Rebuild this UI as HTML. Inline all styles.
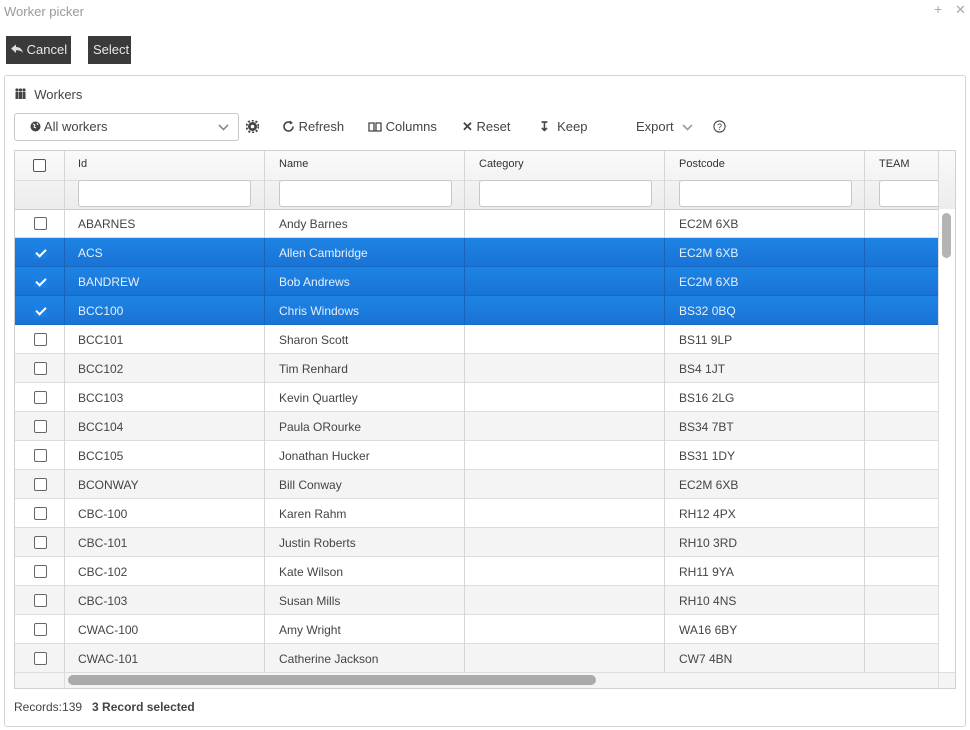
<!DOCTYPE html>
<html><head><meta charset="utf-8">
<style>
*{box-sizing:border-box;margin:0;padding:0}
body{width:970px;height:730px;background:#fff;font-family:"Liberation Sans",sans-serif;font-size:12px;color:#333;position:relative;overflow:hidden}
.a{position:absolute}
.btn{position:absolute;background:#3a3a3a;color:#e8e8e8;font-size:13px;height:28px;line-height:28px;padding:0 5px;white-space:nowrap}
.panel{left:4px;top:75px;width:962px;height:652px;border:1px solid #d4d4d4;border-radius:3px}
.tb{top:119px;font-size:13px;color:#444;white-space:nowrap}
.grid{left:14px;top:150px;width:942px;height:539px;border:1px solid #d0d0d0;overflow:hidden}
.hdr{left:0;top:0;width:942px;height:58px;background:linear-gradient(#fafafa,#ececec)}
.vl{position:absolute;top:0;width:1px;background:#d6d6d6}
.ht{position:absolute;top:7px;font-size:11px;color:#333}
.fi{position:absolute;top:29px;height:27px;background:#fff;border:1px solid #c8c8c8;border-radius:3px}
.row{position:absolute;left:0;width:924px;height:29px;border-bottom:1px solid #dcdcdc;font-size:12px;line-height:30px;color:#444}
.row span{position:absolute;top:0}
.row.g{background:#f4f4f4}
.row.s{background:linear-gradient(#1d84e3,#1973d6);color:#e6f0fb;border-bottom:1px solid #1868c4}
.cb{position:absolute;left:19px;top:8px;width:13px;height:13px;border:1px solid #666;border-radius:2px;background:#fff}
.s .cb{border:none;background:#1a80e6}
.s .cb:after{content:"";position:absolute;left:4px;top:1px;width:4px;height:8px;border:solid #fff;border-width:0 2px 2px 0;transform:rotate(45deg)}
.cl{position:absolute;top:0;width:1px;height:29px;background:#d6d6d6}
.s .cl{background:#1a64b8}
</style></head><body>
<div class="a" style="left:4px;top:4px;font-size:13px;color:#999">Worker picker</div>
<div class="a" style="left:934px;top:1px;font-size:14px;color:#aaa">+</div>
<div class="a" style="left:955px;top:2px;font-size:13px;color:#aaa">✕</div>
<div class="btn" style="left:6px;top:36px;width:65px"><svg width="12" height="10" viewBox="0 0 12 10" style="vertical-align:0px"><path d="M0 4.5L5 0.5v2.5c4 0 6 2 7 6-1.5-2-3.5-2.8-7-2.8v2.8z" fill="#ddd"/></svg> Cancel</div>
<div class="btn" style="left:88px;top:36px;width:43px">Select</div>

<div class="a panel"></div>
<div class="a" style="left:14px;top:87px;font-size:13px;color:#444"><svg width="13" height="12" viewBox="0 0 13 12" style="vertical-align:-1px"><g fill="#444"><circle cx="3" cy="2" r="1.6"/><circle cx="6.5" cy="2" r="1.6"/><circle cx="10" cy="2" r="1.6"/><rect x="1.5" y="4" width="3" height="7"/><rect x="5" y="4" width="3" height="7"/><rect x="8.5" y="4" width="3" height="7"/></g></svg>&nbsp; Workers</div>

<div class="a" style="left:14px;top:113px;width:225px;height:28px;border:1px solid #c8c8c8;border-radius:3px;font-size:13px;color:#444;line-height:26px;padding-left:15px"><svg width="11" height="11" viewBox="0 0 11 11" style="vertical-align:-1px"><circle cx="5.5" cy="5.5" r="5" fill="#444"/><path d="M3 3l2 1-1 2 2 1M7 2l1 2" stroke="#fff" stroke-width="1" fill="none"/></svg> All workers
<svg class="a" style="right:9px;top:10px" width="11" height="7" viewBox="0 0 11 7"><path d="M1 1l4.5 4.5L10 1" stroke="#888" stroke-width="1.6" fill="none"/></svg></div>
<svg class="a" style="left:246px;top:120px" width="13" height="13" viewBox="0 0 13 13"><circle cx="6.5" cy="6.5" r="4.5" fill="#444"/><circle cx="6.5" cy="6.5" r="6" fill="none" stroke="#444" stroke-width="2" stroke-dasharray="2 1.9"/><circle cx="6.5" cy="6.5" r="1.8" fill="#fff"/></svg>
<div class="a tb" style="left:282px"><svg width="13" height="13" viewBox="0 0 13 13" style="vertical-align:-2px"><path d="M11 6.5A4.5 4.5 0 1 1 9.2 2.9" stroke="#444" stroke-width="1.6" fill="none"/><path d="M8 0.5l3 2.5-3.3 1.5z" fill="#444"/></svg> Refresh</div>
<div class="a tb" style="left:368px"><svg width="14" height="11" viewBox="0 0 14 11" style="vertical-align:-1px"><path d="M1 2h5v8H1zM8 2h5v8H8z M6 10h2" stroke="#444" stroke-width="1.3" fill="none"/></svg> Columns</div>
<div class="a tb" style="left:462px"><span style="font-weight:bold">✕</span> Reset</div>
<div class="a tb" style="left:539px"><span style="font-weight:bold">&#8615;</span>&nbsp; Keep</div>
<div class="a tb" style="left:636px">Export <svg width="11" height="7" viewBox="0 0 11 7" style="margin-left:5px"><path d="M1 1l4.5 4.5L10 1" stroke="#999" stroke-width="1.6" fill="none"/></svg></div>
<svg class="a" style="left:713px;top:120px" width="13" height="13" viewBox="0 0 13 13"><circle cx="6.5" cy="6.5" r="5.6" stroke="#444" stroke-width="1.1" fill="none"/><text x="6.5" y="10" font-size="9" text-anchor="middle" fill="#444" font-family="Liberation Sans">?</text></svg>

<div class="a grid">
  <div class="a hdr"></div>
  <div class="a" style="left:0;top:29px;width:942px;height:1px;background:#ddd"></div>
  <div class="a" style="left:0;top:58px;width:942px;height:1px;background:#ccc"></div>
  <div class="vl" style="left:49px;height:58px"></div>
  <div class="vl" style="left:249px;height:58px"></div>
  <div class="vl" style="left:449px;height:58px"></div>
  <div class="vl" style="left:649px;height:58px"></div>
  <div class="vl" style="left:849px;height:58px"></div>
  <div class="cb" style="left:18px;top:8px;border-color:#555"></div>
  <div class="ht" style="left:63px">Id</div>
  <div class="ht" style="left:264px">Name</div>
  <div class="ht" style="left:464px">Category</div>
  <div class="ht" style="left:664px">Postcode</div>
  <div class="ht" style="left:864px">TEAM</div>
  <div class="fi" style="left:63px;width:173px"></div>
  <div class="fi" style="left:264px;width:173px"></div>
  <div class="fi" style="left:464px;width:173px"></div>
  <div class="fi" style="left:664px;width:173px"></div>
  <div class="fi" style="left:864px;width:70px"></div>
  <div class="a" style="left:923px;top:0;width:19px;height:58px;background:linear-gradient(#fafafa,#ececec);border-left:1px solid #d6d6d6"></div>

  <div id="rows"></div>
  <div class="a" style="left:923px;top:58px;width:18px;height:463px;background:#fff;border-left:1px solid #ddd"></div>
  <div class="a" style="left:927px;top:62px;width:9px;height:45px;background:#b4b4b4;border-radius:5px"></div>
  <div class="a" style="left:0;top:521px;width:942px;height:17px;background:#f4f4f4;border-top:1px solid #ddd"></div>
  <div class="a" style="left:49px;top:521px;width:1px;height:17px;background:#ddd"></div>
  <div class="a" style="left:923px;top:521px;width:1px;height:17px;background:#ddd"></div>
  <div class="a" style="left:53px;top:524px;width:528px;height:10px;background:#aaa;border-radius:5px"></div>
</div>

<div class="a" style="left:14px;top:700px;font-size:12px;color:#444">Records:139 &nbsp; <b>3 Record selected</b></div>

<script>
var d=[["ABARNES","Andy Barnes","EC2M 6XB"],["ACS","Allen Cambridge","EC2M 6XB"],["BANDREW","Bob Andrews","EC2M 6XB"],["BCC100","Chris Windows","BS32 0BQ"],["BCC101","Sharon Scott","BS11 9LP"],["BCC102","Tim Renhard","BS4 1JT"],["BCC103","Kevin Quartley","BS16 2LG"],["BCC104","Paula ORourke","BS34 7BT"],["BCC105","Jonathan Hucker","BS31 1DY"],["BCONWAY","Bill Conway","EC2M 6XB"],["CBC-100","Karen Rahm","RH12 4PX"],["CBC-101","Justin Roberts","RH10 3RD"],["CBC-102","Kate Wilson","RH11 9YA"],["CBC-103","Susan Mills","RH10 4NS"],["CWAC-100","Amy Wright","WA16 6BY"],["CWAC-101","Catherine Jackson","CW7 4BN"]];
var h="";
d.forEach(function(r,i){
 var c=(i>=1&&i<=3)?"s":(i%2==1?"g":"");
 h+='<div class="row '+c+'" style="top:'+(58+i*29)+'px"><div class="cb"></div>'+
 '<div class="cl" style="left:49px"></div><div class="cl" style="left:249px"></div><div class="cl" style="left:449px"></div><div class="cl" style="left:649px"></div><div class="cl" style="left:849px"></div>'+
 '<span style="left:63px">'+r[0]+'</span><span style="left:264px">'+r[1]+'</span><span style="left:664px">'+r[2]+'</span></div>';
});
document.getElementById("rows").innerHTML=h;
</script>
</body></html>
